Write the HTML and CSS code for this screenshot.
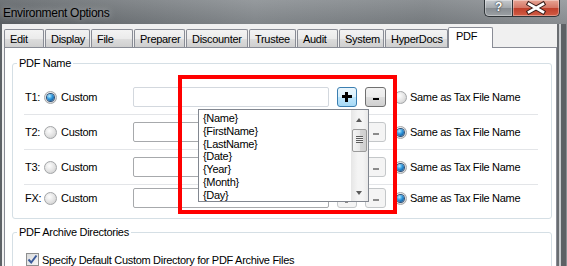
FILE: index.html
```html
<!DOCTYPE html>
<html lang="en">
	<head>
		<meta charset="UTF-8" />
		<title>Environment Options</title>
		<link rel="stylesheet" href="styles.css">
	</head>
	<body>
		<div class="window">
			<div class="titlebar">
				<div class="title">Environment Options</div>
				<div class="caption-buttons">
					<div class="cap-btn help">?</div>
					<div class="cap-btn close">
						<svg width="46" height="15" viewBox="0 0 46 15">
							<path d="M16 4 L30 12 M30 4 L16 12" stroke="#3a1d18" stroke-width="4.6" stroke-linecap="square" fill="none" />
							<path d="M16 4 L30 12 M30 4 L16 12" stroke="#ffffff" stroke-width="2.6" stroke-linecap="square" fill="none" />
						</svg>
					</div>
				</div>
			</div>
			<div class="frame-body">
				<div class="client">
					<div class="tabs">
						<div class="tab tab-edit">Edit</div>
						<div class="tab tab-display">Display</div>
						<div class="tab tab-file">File</div>
						<div class="tab tab-preparer">Preparer</div>
						<div class="tab tab-discounter">Discounter</div>
						<div class="tab tab-trustee">Trustee</div>
						<div class="tab tab-audit">Audit</div>
						<div class="tab tab-system">System</div>
						<div class="tab tab-hyperdocs">HyperDocs</div>
						<div class="tab tab-pdf active">PDF</div>
					</div>
					<div class="panel">
						<fieldset class="group group-name">
							<legend>PDF Name</legend>
							<div class="row">
								<span class="row-label">T1:</span>
								<span class="radio checked"></span>
								<span class="radio-text">Custom</span>
								<span class="textbox soft"></span>
								<span class="btn plus hot"></span>
								<span class="btn minus"></span>
								<span class="radio same"></span>
								<span class="same-text">Same as Tax File Name</span>
							</div>
							<div class="row">
								<span class="row-label">T2:</span>
								<span class="radio"></span>
								<span class="radio-text">Custom</span>
								<span class="textbox"></span>
								<span class="btn plus off"></span>
								<span class="btn minus off"></span>
								<span class="radio same checked"></span>
								<span class="same-text">Same as Tax File Name</span>
							</div>
							<div class="row">
								<span class="row-label">T3:</span>
								<span class="radio"></span>
								<span class="radio-text">Custom</span>
								<span class="textbox"></span>
								<span class="btn plus off"></span>
								<span class="btn minus off"></span>
								<span class="radio same checked"></span>
								<span class="same-text">Same as Tax File Name</span>
							</div>
							<div class="row">
								<span class="row-label">FX:</span>
								<span class="radio"></span>
								<span class="radio-text">Custom</span>
								<span class="textbox"></span>
								<span class="btn plus off"></span>
								<span class="btn minus off"></span>
								<span class="radio same checked"></span>
								<span class="same-text">Same as Tax File Name</span>
							</div>
						</fieldset>
						<fieldset class="group group-archive">
							<legend>PDF Archive Directories</legend>
							<div class="check-row">
								<span class="checkbox">
									<svg width="11" height="11" viewBox="0 0 11 11">
										<path d="M1.5 5.5 L4.2 8.5 L9.5 1.5" stroke="#3b5a9a" stroke-width="2" fill="none" />
									</svg>
								</span>
								<span class="check-label">Specify Default Custom Directory for PDF Archive Files</span>
							</div>
						</fieldset>
					</div>
				</div>
				<div class="right-frame"></div>
			</div>

			<!-- popup list opened from the + button -->
			<div class="dropdown">
				<div class="dropdown-list">
					<div>{Name}</div>
					<div>{FirstName}</div>
					<div>{LastName}</div>
					<div>{Date}</div>
					<div>{Year}</div>
					<div>{Month}</div>
					<div>{Day}</div>
				</div>
				<div class="scrollbar">
					<div class="sb-arrow up"></div>
					<div class="sb-thumb"></div>
					<div class="sb-space"></div>
					<div class="sb-arrow down"></div>
				</div>
			</div>

			<div class="highlight"></div>
		</div>
	</body>
</html>
```

FILE: styles.css
```css
* {
	margin: 0;
	padding: 0;
	box-sizing: border-box;
}

body {
	font-family: "Liberation Sans", Arial, sans-serif;
	font-size: 11px;
	letter-spacing: -0.3px;
	color: #000;
	background: #6b7074;
}

.window {
	position: relative;
	width: 567px;
	height: 266px;
	overflow: hidden;
	display: flex;
	flex-direction: column;
	background: linear-gradient(to right, #5d6266, #878c90 45%, #7b8084 75%, #8f9397);
}

/* title bar */
.titlebar {
	height: 24px;
	flex-shrink: 0;
	display: flex;
	justify-content: space-between;
	align-items: flex-start;
	background: linear-gradient(rgba(255, 255, 255, 0.12), rgba(0, 0, 0, 0.05));
}

.title {
	font-size: 12px;
	line-height: 24px;
	padding: 1px 0 0 3px;
	text-shadow: 0 0 6px rgba(255, 255, 255, 0.55);
}

.caption-buttons {
	display: flex;
	margin-right: 7px;
}

.cap-btn {
	height: 17px;
	border: 1px solid #2f3438;
	border-top: none;
	box-shadow: inset 0 0 0 1px rgba(255, 255, 255, 0.35);
}

.help {
	width: 28px;
	border-radius: 0 0 0 5px;
	border-right: none;
	background: linear-gradient(#c5c9cd, #a2a7ab 50%, #868b90 51%, #9ca1a5);
	color: #fff;
	font-weight: bold;
	font-size: 12px;
	line-height: 15px;
	text-align: center;
	text-shadow: 0 0 2px #30353a, 0 0 1px #30353a;
}

.close {
	width: 48px;
	border-radius: 0 0 5px 0;
	background: linear-gradient(#e7a595, #d47564 50%, #bf3f2b 51%, #d25c44);
}

.close svg {
	display: block;
}

/* window body */
.frame-body {
	flex: 1;
	display: flex;
	min-height: 0;
}

.client {
	width: 555px;
	margin-left: 2px;
	background: #f0f0f0;
	display: flex;
	flex-direction: column;
}

.right-frame {
	flex: 1;
	background: linear-gradient(to right, #696d71 0 2px, #c8cbce 2px 4px, #5d6165 4px 9px, #8a8e92 9px);
}

/* tabs */
.tabs {
	display: flex;
	align-items: flex-end;
	gap: 1px;
	height: 20px;
	margin-top: 3px;
	padding-left: 2px;
}

.tab {
	height: 18px;
	border: 1px solid #898c95;
	border-bottom: none;
	border-radius: 2px 2px 0 0;
	background: linear-gradient(#f3f3f3, #ebebeb 50%, #dddddd 51%, #cfcfcf);
	padding: 2px 0 0 5px;
	line-height: 14px;
	white-space: nowrap;
}

.tab.active {
	height: 21px;
	margin-bottom: -1px;
	margin-left: -1px;
	padding: 1px 0 0 7px;
	background: #fff;
	position: relative;
	z-index: 1;
}

.tab-edit { width: 40px; }
.tab-display { width: 45px; }
.tab-file { width: 42px; }
.tab-preparer { width: 51px; }
.tab-discounter { width: 62px; }
.tab-trustee { width: 47px; }
.tab-audit { width: 41px; }
.tab-system { width: 45px; }
.tab-hyperdocs { width: 63px; }
.tab-pdf { width: 45px; }

.panel {
	flex: 1;
	margin-left: 2px;
	border: 1px solid #898c95;
	background: #fff;
	padding: 8px 4px 0 7px;
}

/* group boxes */
.group {
	border: 1px solid #d5dfe5;
	border-radius: 3px;
}

.group legend {
	margin-left: 4px;
	padding: 0 2px;
	line-height: 13px;
}

.group-name {
	margin-top: 1px;
	padding: 10px 0 7px;
}

.group-archive {
	margin-top: 7px;
	height: 60px;
}

.row {
	display: flex;
	align-items: center;
	height: 35px;
	margin: 0 13px 0 11px;
	border-bottom: 1px solid #e3e5e8;
	white-space: nowrap;
}

.row:last-child {
	height: 26px;
	border-bottom: none;
}

.row-label {
	width: 20px;
	padding-left: 1px;
}

.radio {
	position: relative;
	flex-shrink: 0;
	width: 13px;
	height: 13px;
	border-radius: 50%;
	border: 1px solid #a3a5a7;
	background: radial-gradient(circle at 40% 35%, #fdfdfd, #e2e2e2 55%, #c6c6c6);
}

.radio.checked::after {
	content: "";
	position: absolute;
	left: 2px;
	top: 2px;
	width: 7px;
	height: 7px;
	border-radius: 50%;
	background: radial-gradient(circle at 35% 30%, #b5ecff, #2d95dc 45%, #0b3c74);
	box-shadow: 0 0 0 1px #2a4f77;
}

.radio-text {
	width: 72px;
	margin-left: 4px;
}

.same {
	margin-left: 8px;
}

.same-text {
	margin-left: 3px;
}

.textbox {
	flex-shrink: 0;
	width: 196px;
	height: 20px;
	border: 1px solid #a7a9ac;
	border-radius: 2px;
	background: #fff;
}

.textbox.soft {
	border-color: #d3d8de;
}

.btn {
	position: relative;
	flex-shrink: 0;
	width: 20px;
	height: 20px;
	margin-left: 8px;
	border: 1px solid #707070;
	border-radius: 3px;
	background: linear-gradient(#f2f2f2, #ebebeb 50%, #dddddd 51%, #cfcfcf);
}

.btn.minus {
	width: 21px;
}

.btn.hot {
	border-color: #3c7fb1;
	background: linear-gradient(#eaf6fd, #d9f0fc 50%, #bee6fd 51%, #a7d9f5);
}

.btn.off {
	border-color: #c4c7c9;
	background: #f4f4f4;
}

.btn::before,
.btn::after {
	content: "";
	position: absolute;
	background: #000;
}

.plus::before {
	left: 4px;
	top: 7px;
	width: 10px;
	height: 3px;
}

.plus::after {
	left: 7px;
	top: 4px;
	width: 3px;
	height: 10px;
}

.minus::before {
	left: 7px;
	top: 10px;
	width: 6px;
	height: 2px;
}

.minus::after {
	display: none;
}

.btn.off::before,
.btn.off::after {
	background: #8a8a8a;
}

.check-row {
	display: flex;
	align-items: center;
	margin: 14px 0 0 13px;
	white-space: nowrap;
}

.checkbox {
	width: 13px;
	height: 13px;
	border: 1px solid #8e8f8f;
	background: linear-gradient(135deg, #d9dadb, #f7f7f7);
	display: flex;
	align-items: center;
	justify-content: center;
}

.checkbox svg {
	display: block;
}

.check-label {
	margin-left: 3px;
}

/* popup list */
.dropdown {
	position: absolute;
	left: 198px;
	top: 109px;
	width: 171px;
	height: 93px;
	border: 1px solid #828790;
	background: #fff;
	display: flex;
	z-index: 5;
}

.dropdown-list {
	flex: 1;
	padding: 2px 0 0 4px;
	line-height: 12.8px;
	overflow: hidden;
}

.scrollbar {
	width: 17px;
	display: flex;
	flex-direction: column;
	align-items: center;
	background: linear-gradient(to right, #e6e6e6, #f4f4f4 40%, #f4f4f4 70%, #e9e9e9);
}

.sb-arrow {
	height: 17px;
	width: 17px;
	position: relative;
}

.sb-arrow::after {
	content: "";
	position: absolute;
	left: 5px;
	border-left: 3.5px solid transparent;
	border-right: 3.5px solid transparent;
}

.sb-arrow.up::after {
	top: 8px;
	border-bottom: 4px solid #5a5a5a;
}

.sb-arrow.down::after {
	top: 7px;
	border-top: 4px solid #5a5a5a;
}

.sb-thumb {
	position: relative;
	width: 15px;
	height: 23px;
	margin-top: 2px;
	border: 1px solid #9b9b9b;
	border-radius: 2px;
	background: linear-gradient(to right, #f4f4f4, #e8e8e8 50%, #d6d6d6 51%, #cfcfcf);
}

.sb-thumb::after {
	content: "";
	position: absolute;
	left: 3px;
	top: 6px;
	width: 7px;
	height: 7px;
	background: repeating-linear-gradient(#5c5c5c 0 1px, #f0f0f0 1px 2px);
}

.sb-space {
	flex: 1;
}

/* red annotation frame */
.highlight {
	position: absolute;
	left: 178px;
	top: 75px;
	width: 219px;
	height: 139px;
	border: 4px solid #ff0000;
	z-index: 10;
}
```
